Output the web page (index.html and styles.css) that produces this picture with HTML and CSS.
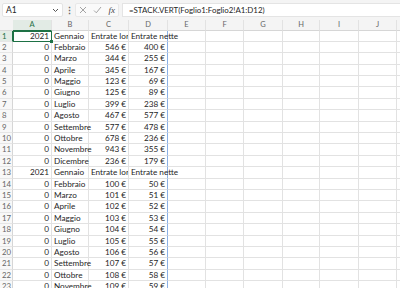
FILE: index.html
```html
<!DOCTYPE html>
<html lang="it">

<head>
  <meta charset="UTF-8">
  <meta name="viewport" content="width=device-width, initial-scale=1.0">
  <title>Foglio</title>
  <link rel="stylesheet" href="styles.css">
</head>

<body>
  <header class="bar">
    <div class="namebox">
      <span>A1</span>
      <svg class="chevron" width="7" height="5" viewBox="0 0 7 5"><path d="M1 1l2.5 2.5L6 1" fill="none" stroke="#555" stroke-width="1"/></svg>
    </div>
    <div class="dots">⋮</div>
    <div class="fx-group">
      <svg width="8" height="8" viewBox="0 0 8 8"><path d="M1 1l6 6M7 1L1 7" stroke="#9a9a9a" stroke-width="0.9"/></svg>
      <svg width="9" height="8" viewBox="0 0 9 8"><path d="M1 4.5l2.3 2.3L8 1" fill="none" stroke="#9a9a9a" stroke-width="0.9"/></svg>
      <i class="fx">fx</i>
    </div>
    <div class="formula">=STACK.VERT(Foglio1:Foglio2!A1:D12)</div>
  </header>

  <main id="sheet" class="sheet"></main>

  <script>
    const d = document,
      $sheet = d.getElementById('sheet'),
      COLS = ['A', 'B', 'C', 'D', 'E', 'F', 'G', 'H', 'I', 'J', ''],
      DATA = [
        [2021, 'Gennaio', 'Entrate lorde', 'Entrate nette'],
        [0, 'Febbraio', '546 €', '400 €'],
        [0, 'Marzo', '344 €', '255 €'],
        [0, 'Aprile', '345 €', '167 €'],
        [0, 'Maggio', '123 €', '69 €'],
        [0, 'Giugno', '125 €', '89 €'],
        [0, 'Luglio', '399 €', '238 €'],
        [0, 'Agosto', '467 €', '577 €'],
        [0, 'Settembre', '577 €', '478 €'],
        [0, 'Ottobre', '678 €', '236 €'],
        [0, 'Novembre', '943 €', '355 €'],
        [0, 'Dicembre', '236 €', '179 €'],
        [2021, 'Gennaio', 'Entrate lorde', 'Entrate nette'],
        [0, 'Febbraio', '100 €', '50 €'],
        [0, 'Marzo', '101 €', '51 €'],
        [0, 'Aprile', '102 €', '52 €'],
        [0, 'Maggio', '103 €', '53 €'],
        [0, 'Giugno', '104 €', '54 €'],
        [0, 'Luglio', '105 €', '55 €'],
        [0, 'Agosto', '106 €', '56 €'],
        [0, 'Settembre', '107 €', '57 €'],
        [0, 'Ottobre', '108 €', '58 €'],
        [0, 'Novembre', '109 €', '59 €']
      ]

    let html = '<div class="corner"></div>'
    COLS.forEach((c, i) => {
      html += `<div class="col-head${i === 0 ? ' active' : ''}">${c}</div>`
    })

    DATA.forEach((row, r) => {
      html += `<div class="row-head${r === 0 ? ' active' : ''}">${r + 1}</div>`
      COLS.forEach((c, i) => {
        let val = row[i] !== undefined ? row[i] : '',
          cls = 'cell'
        if (i === 3) cls += ' spill'
        if (r === 0 && i === 0) cls += ' selected'
        // numeri e importi a destra, testo a sinistra
        if (typeof val === 'number' || /€$/.test(val)) cls += ' num'
        if (val === 'Entrate lorde') cls += ' clip'
        html += `<div class="${cls}">${val}</div>`
      })
    })

    $sheet.innerHTML = html
  </script>
</body>

</html>
```

FILE: styles.css
```css
html {
  box-sizing: border-box;
  font-family: 'Lato', 'Liberation Sans', sans-serif;
  font-size: 8.2px;
}

*,
*:after,
*:before {
  box-sizing: inherit;
}

body {
  margin: 0;
  width: 400px;
  height: 288px;
  overflow: hidden;
  background-color: #fff;
  color: #262626;
}

.bar {
  display: flex;
  align-items: center;
  height: 20px;
  padding: 0 0 0 2px;
  background-color: #f4f4f4;
}

.namebox {
  display: flex;
  align-items: center;
  justify-content: space-between;
  width: 61px;
  height: 14px;
  padding: 0 3px 0 3px;
  border: 1px solid #e4e4e4;
  border-radius: 2px;
  background-color: #fff;
  font-size: 8.5px;
}

.dots {
  width: 12px;
  text-align: center;
  color: #666;
  font-size: 9px;
  font-weight: bold;
}

.fx-group {
  display: flex;
  align-items: center;
  justify-content: space-around;
  width: 44px;
  height: 14px;
  border: 1px solid #e8e8e8;
  border-radius: 2px;
  background-color: #fafafa;
}

.fx {
  font-family: 'Liberation Serif', serif;
  font-size: 9px;
  color: #444;
}

.formula {
  flex: 1;
  height: 14px;
  margin-left: 3px;
  padding-left: 6px;
  line-height: 13px;
  border: 1px solid #e4e4e4;
  border-right: none;
  background-color: #fff;
  font-size: 7.9px;
  white-space: nowrap;
}

.sheet {
  display: grid;
  grid-template-columns: 13px 39px 37px 40px 39px 38px 38px 39px 37px 39px 38px 1fr;
  grid-template-rows: 10.5px;
  grid-auto-rows: 11.4px;
  line-height: 10.5px;
}

.corner,
.col-head {
  background-color: #f4f4f4;
  border-bottom: 1px solid #d6d6d6;
}

.col-head {
  border-right: 1px solid #e2e2e2;
  text-align: center;
  color: #666;
  font-size: 7.5px;
  line-height: 10px;
}

.col-head.active {
  background-color: #e2ebe5;
  border-bottom: 1px solid #1e7145;
  color: #1e7145;
}

.row-head {
  padding-left: 2px;
  background-color: #f8f8f8;
  border-right: 1px solid #d6d6d6;
  border-bottom: 1px solid #e6e6e6;
  color: #666;
  font-size: 7.8px;
}

.row-head.active {
  background-color: #e2ebe5;
  border-right: 1px solid #1e7145;
  color: #1e7145;
}

.cell {
  padding: 0 2px;
  border-right: 1px solid #e2e2e2;
  border-bottom: 1px solid #e2e2e2;
  white-space: nowrap;
}

.num {
  text-align: right;
}

.clip {
  overflow: hidden;
}

.spill {
  border-right: 1px solid #8ab0e6;
}

.selected {
  position: relative;
  outline: 1.5px solid #1e7145;
  outline-offset: -1px;
}

.selected:after {
  content: '';
  position: absolute;
  right: -2px;
  bottom: -2px;
  width: 3px;
  height: 3px;
  background-color: #1e7145;
}
```
